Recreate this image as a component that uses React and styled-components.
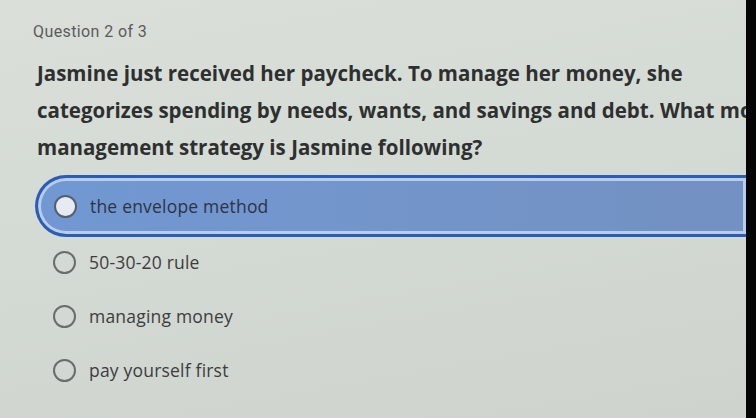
import React from "react";
import styled, { createGlobalStyle } from "styled-components";

const Global = createGlobalStyle`
  html, body { margin: 0; padding: 0; }
  body { width: 756px; height: 418px; overflow: hidden; font-family: "Open Sans", "Liberation Sans", sans-serif; }
`;

const Screen = styled.div`
  display: flex;
  width: 756px;
  height: 418px;
  background: linear-gradient(170deg, #dadfda 0%, #d4dad4 45%, #ced3cd 100%);
`;

const Content = styled.main`
  flex: 1;
  min-width: 0;
  display: flex;
  flex-direction: column;
  padding: 22px 0 0 33px;
  overflow: hidden;
`;

const Edge = styled.div`
  width: 10px;
  background: #050505;
`;

const Counter = styled.div`
  font-family: Roboto, sans-serif;
  font-size: 16px;
  color: #5a5c5b;
  line-height: 20px;
  letter-spacing: 0.4px;
`;

const Prompt = styled.p`
  margin: 13px 0 0 4px;
  font-size: 20.5px;
  font-weight: 700;
  line-height: 37px;
  color: #2e3030;
  white-space: nowrap;
  letter-spacing: 0px;
`;

const Options = styled.div`
  display: flex;
  flex-direction: column;
  margin-top: 9px;
`;

const Option = styled.div`
  display: flex;
  align-items: center;
  gap: 13px;
  height: ${p => (p.$selected ? "62px" : "54px")};
  box-sizing: border-box;
  margin-left: 2px;
  padding-left: ${p => (p.$selected ? "16px" : "18px")};
  border-radius: ${p => (p.$selected ? "31px 0 0 31px" : "0")};
  border: ${p => (p.$selected ? "3px solid #2b5cb6" : "none")};
  border-right: none;
  background: ${p => (p.$selected ? "linear-gradient(90deg, #7198d3, #7394c8 60%, #7391c2)" : "transparent")};
  box-shadow: ${p => (p.$selected ? "inset 0 0 0 3px #b8cceb" : "none")};
  margin-bottom: ${p => (p.$selected ? "-2px" : "0")};
`;

const Radio = styled.span`
  width: 19px;
  height: 19px;
  border-radius: 50%;
  border: 2.5px solid ${p => (p.$selected ? "#55606e" : "#6a6d6b")};
  background: ${p => (p.$selected ? "#e6ebf1" : "transparent")};
  flex: none;
`;

const Label = styled.span`
  font-size: 17.5px;
  color: ${p => (p.$selected ? "#2b3446" : "#3c3e3d")};
  letter-spacing: 0.2px;
`;

const options = [
  { text: "the envelope method", selected: true },
  { text: "50-30-20 rule" },
  { text: "managing money" },
  { text: "pay yourself first" },
];

export default function App() {
  return (
    <>
      <Global />
      <Screen>
        <Content>
          <Counter>Question 2 of 3</Counter>
          <Prompt>
            Jasmine just received her paycheck. To manage her money, she
            <br />
            categorizes spending by needs, wants, and savings and debt. What money
            <br />
            management strategy is Jasmine following?
          </Prompt>
          <Options>
            {options.map(o => (
              <Option key={o.text} $selected={o.selected}>
                <Radio $selected={o.selected} />
                <Label $selected={o.selected}>{o.text}</Label>
              </Option>
            ))}
          </Options>
        </Content>
        <Edge />
      </Screen>
    </>
  );
}
